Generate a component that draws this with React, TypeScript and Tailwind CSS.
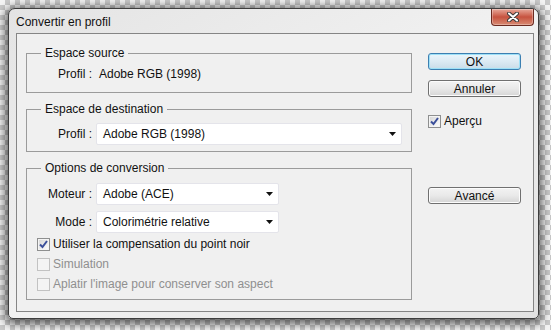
import React from "react";

const Check = ({ checked, disabled }: { checked?: boolean; disabled?: boolean }) => (
  <span
    className={`w-[13px] h-[13px] shrink-0 border p-[1px] ${
      disabled ? "border-[#c2c2c2] bg-[#f4f4f4]" : "border-[#8e8f8f] bg-[#f4f4f4]"
    }`}
  >
    <span
      className={`relative block w-full h-full ${
        disabled ? "bg-[#f4f4f4]" : "bg-gradient-to-br from-[#d8d8d8] to-[#fbfbfb]"
      }`}
    >
      {checked && (
        <svg className="absolute left-[-1px] top-[-1px]" width="11" height="11" viewBox="0 0 11 11">
          <path d="M2 5.5L4.5 8L9 2" fill="none" stroke="#3b4f9a" strokeWidth="2" />
        </svg>
      )}
    </span>
  </span>
);

const Select = ({ value, w }: { value: string; w: string }) => (
  <div className={`${w} h-[22px] bg-white border border-[#e4e4ea] rounded-[2px] flex items-center justify-between pl-[6px] pr-[5px]`}>
    <span className="text-[12px] text-[#111]">{value}</span>
    <svg width="7" height="4" viewBox="0 0 7 4">
      <path d="M0 0H7L3.5 4Z" fill="#111" />
    </svg>
  </div>
);

const Btn = ({ label, primary }: { label: string; primary?: boolean }) => (
  <button
    className={`w-[93px] h-[17px] rounded-[3px] border text-[12px] leading-none text-[#111] flex items-center justify-center ${
      primary
        ? "border-[#3c7fb1] bg-gradient-to-b from-[#eaf6fc] via-[#dceaf3] to-[#c9dce8] shadow-[inset_0_0_0_1px_#9ee0f7]"
        : "border-[#707070] bg-gradient-to-b from-[#f3f3f3] via-[#e9e9e9] to-[#d5d5d5] shadow-[inset_0_0_0_1px_#fcfcfc]"
    }`}
  >
    {label}
  </button>
);

const Group = ({ title, h, children }: { title: string; h: string; children: React.ReactNode }) => (
  <fieldset className={`${h} w-[386px] border border-[#9b9b9b] p-0 m-0`}>
    <legend className="ml-[14px] px-[4px] text-[12px] leading-[16px] text-[#111]">{title}</legend>
    {children}
  </fieldset>
);

export default function App() {
  return (
    <div className="w-[551px] h-[330px] overflow-hidden pl-[8px] pt-[8px] bg-[image:repeating-conic-gradient(#c9c9c9_0%_25%,#f4f4f4_0%_50%)] bg-[length:10px_10px] font-['Liberation_Sans',Arial,sans-serif]">
      <div className="w-[531px] h-[311px] flex flex-col rounded-t-[7px] rounded-b-[5px] border border-[#3d3d3d] bg-gradient-to-br from-[#e4e4e4] via-[#f1f1f1] to-[#e2e2e2] shadow-[0_2px_10px_3px_rgba(0,0,0,0.6)]">
        <div className="h-[24px] flex items-start justify-between pl-[7px]">
          <span className="mt-[5px] text-[12px] leading-[16px] text-[#111]">Convertir en profil</span>
          <div className="w-[43px] h-[17px] mr-[4px] rounded-b-[4px] border border-t-0 border-[#6b2a20] bg-gradient-to-b from-[#e6a89a] via-[#c6523f] to-[#d88a72] shadow-[inset_0_0_0_1px_rgba(255,255,255,0.3)] flex items-center justify-center">
            <svg width="12" height="10" viewBox="0 0 12 10">
              <path d="M2 1.5L10 8.5M10 1.5L2 8.5" stroke="#3a3a3a" strokeWidth="4" strokeLinecap="round" />
              <path d="M2 1.5L10 8.5M10 1.5L2 8.5" stroke="#ffffff" strokeWidth="2" strokeLinecap="round" />
            </svg>
          </div>
        </div>
        <div className="flex-1 ml-[7px] mr-[4px] mb-[6px] border border-[#858585] bg-[#f0f0f0] flex">
          <div className="pl-[9px] pt-[11px] flex flex-col gap-[8px]">
            <Group title="Espace source" h="h-[48px]">
              <div className="mt-[5px] flex items-center h-[16px] text-[12px] text-[#111]">
                <span className="w-[65px] text-right">Profil :</span>
                <span className="ml-[7px]">Adobe RGB (1998)</span>
              </div>
            </Group>
            <Group title="Espace de destination" h="h-[51px]">
              <div className="mt-[6px] flex items-center text-[12px] text-[#111]">
                <span className="w-[65px] text-right">Profil :</span>
                <span className="ml-[4px]">
                  <Select value="Adobe RGB (1998)" w="w-[306px]" />
                </span>
              </div>
            </Group>
            <Group title="Options de conversion" h="h-[140px]">
              <div className="mt-[7px] flex flex-col gap-[6px] text-[12px] text-[#111]">
                <div className="flex items-center">
                  <span className="w-[65px] text-right">Moteur :</span>
                  <span className="ml-[4px]">
                    <Select value="Adobe (ACE)" w="w-[183px]" />
                  </span>
                </div>
                <div className="flex items-center">
                  <span className="w-[65px] text-right">Mode :</span>
                  <span className="ml-[4px]">
                    <Select value="Colorimétrie relative" w="w-[183px]" />
                  </span>
                </div>
              </div>
              <div className="mt-[1px] pl-[10px] flex flex-col text-[12px]">
                <div className="h-[20px] flex items-center gap-[3px] text-[#111]">
                  <Check checked />
                  <span>Utiliser la compensation du point noir</span>
                </div>
                <div className="h-[20px] flex items-center gap-[3px] text-[#8f8f8f]">
                  <Check disabled />
                  <span>Simulation</span>
                </div>
                <div className="h-[20px] flex items-center gap-[3px] text-[#8f8f8f]">
                  <Check disabled />
                  <span>Aplatir l'image pour conserver son aspect</span>
                </div>
              </div>
            </Group>
          </div>
          <div className="ml-[16px] pt-[19px] flex flex-col">
            <Btn label="OK" primary />
            <div className="mt-[10px]">
              <Btn label="Annuler" />
            </div>
            <div className="mt-[16px] h-[16px] flex items-center gap-[3px] text-[12px] text-[#111]">
              <Check checked />
              <span>Aperçu</span>
            </div>
            <div className="mt-[58px]">
              <Btn label="Avancé" />
            </div>
          </div>
        </div>
      </div>
    </div>
  );
}
